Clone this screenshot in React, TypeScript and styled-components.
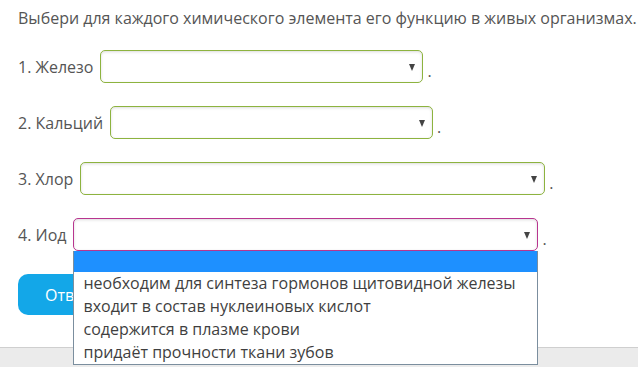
import React from 'react';
import styled, { createGlobalStyle } from 'styled-components';

const GlobalStyle = createGlobalStyle`
  html, body {
    margin: 0;
    padding: 0;
    background: #fff;
  }
  body {
    font-family: "Open Sans", "DejaVu Sans", sans-serif;
    color: #555;
    overflow: hidden;
  }
`;

const Page = styled.div`
  height: 367px;
  display: flex;
  flex-direction: column;
`;

const Content = styled.div`
  flex: 1;
  padding: 7px 18px 0;
`;

const Title = styled.p`
  margin: 0;
  font-size: 16px;
  line-height: 22px;
  color: #555;
  white-space: nowrap;
`;

const Rows = styled.div`
  display: flex;
  flex-direction: column;
  gap: 23px;
  margin-top: 21px;
`;

const Row = styled.div`
  display: flex;
  align-items: center;
  height: 33px;
  font-size: 16px;
`;

const Label = styled.span`
  margin-right: 7px;
  white-space: nowrap;
`;

const SelectWrap = styled.div`
  position: relative;
`;

const SelectBox = styled.div<{ $width: number; $active?: boolean }>`
  box-sizing: border-box;
  width: ${p => p.$width}px;
  height: 33px;
  border: 1px solid ${p => (p.$active ? '#b8358f' : '#8db33f')};
  border-radius: 5px;
  background: #fff;
  box-shadow: inset 0 1px 3px rgba(0, 0, 0, 0.14);
  position: relative;
`;

const Arrow = styled.span`
  position: absolute;
  right: 7px;
  top: 13px;
  width: 0;
  height: 0;
  border-left: 3.5px solid transparent;
  border-right: 3.5px solid transparent;
  border-top: 7px solid #444;
`;

const Dot = styled.span`
  margin-left: 4px;
  align-self: center;
  padding-top: 8px;
`;

const ListBox = styled.ul`
  position: absolute;
  left: 0;
  top: 100%;
  z-index: 2;
  margin: 0;
  padding: 0;
  list-style: none;
  box-sizing: border-box;
  width: 100%;
  background: #fff;
  border: 1px solid #7b8e9e;
  border-top: none;
`;

const Option = styled.li<{ $selected?: boolean }>`
  height: ${p => (p.$selected ? '21px' : '23px')};
  line-height: 23px;
  padding-left: 9px;
  font-size: 16px;
  color: #3f3f3f;
  background: ${p => (p.$selected ? '#1e90ff' : '#fff')};
  white-space: nowrap;
`;

const SubmitButton = styled.button`
  margin-top: 23px;
  width: 120px;
  height: 41px;
  border: none;
  border-radius: 10px;
  background: #13a7e8;
  color: #fff;
  font-family: "Open Sans", sans-serif;
  font-size: 16px;
  text-align: left;
  padding-left: 27px;
`;

const Footer = styled.div`
  height: 19px;
  background: #ebebeb;
  border-top: 1px solid #cfcfcf;
`;

const options = [
  'необходим для синтеза гормонов щитовидной железы',
  'входит в состав нуклеиновых кислот',
  'содержится в плазме крови',
  'придаёт прочности ткани зубов',
];

const rows = [
  { label: '1. Железо', width: 323 },
  { label: '2. Кальций', width: 323 },
  { label: '3. Хлор', width: 465 },
  { label: '4. Иод', width: 465, open: true },
];

export default function App() {
  return (
    <Page>
      <GlobalStyle />
      <Content>
        <Title>Выбери для каждого химического элемента его функцию в живых организмах.</Title>
        <Rows>
          {rows.map(r => (
            <Row key={r.label}>
              <Label>{r.label}</Label>
              <SelectWrap>
                <SelectBox $width={r.width} $active={r.open}>
                  <Arrow />
                </SelectBox>
                {r.open && (
                  <ListBox>
                    <Option $selected>&nbsp;</Option>
                    {options.map(o => (
                      <Option key={o}>{o}</Option>
                    ))}
                  </ListBox>
                )}
              </SelectWrap>
              <Dot>.</Dot>
            </Row>
          ))}
        </Rows>
        <SubmitButton>Ответить</SubmitButton>
      </Content>
      <Footer />
    </Page>
  );
}
